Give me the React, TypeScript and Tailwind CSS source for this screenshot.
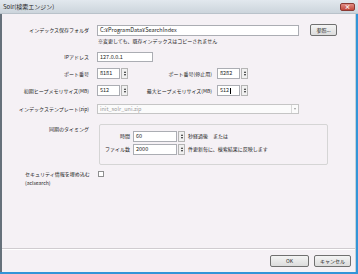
import React from 'react';

function Spin({ value, caret, w = 'w-[23px]' }: { value: string; caret?: boolean; w?: string }) {
  return (
    <div className="flex items-center gap-[1px] h-[11px]">
      <div className={`${w} h-full bg-white border border-[#abadb3] flex items-center pl-[2px] text-[5.5px] text-[#222]`}>
        {value}
        {caret && <span className="w-px h-[6px] bg-black ml-px" />}
      </div>
      <div className="w-[7px] h-full border border-[#b5b5b5] bg-[#f0f0f0] flex flex-col items-center justify-center gap-[1px]">
        <span className="block w-0 h-0 border-l-[1.5px] border-r-[1.5px] border-b-[2px] border-l-transparent border-r-transparent border-b-[#222]" />
        <span className="block w-0 h-0 border-l-[1.5px] border-r-[1.5px] border-t-[2px] border-l-transparent border-r-transparent border-t-[#222]" />
      </div>
    </div>
  );
}

function Label({ children }: { children: React.ReactNode }) {
  return <div className="w-[87px] shrink-0 text-right text-[5px] text-[#222]">{children}</div>;
}

function Btn({ children, w }: { children: React.ReactNode; w: string }) {
  return (
    <div className={`${w} h-[12px] rounded-[2px] border border-[#707070] bg-gradient-to-b from-[#f4f4f4] to-[#dcdcdc] flex items-center justify-center text-[5px] text-[#222]`}>
      {children}
    </div>
  );
}

export default function App() {
  return (
    <div
      className="w-[358px] h-[274px] flex flex-col overflow-hidden bg-[#3395d8]"
      style={{ fontFamily: '"Noto Sans CJK JP", "Liberation Sans", sans-serif' }}
    >
      {/* title bar */}
      <div className="h-[14px] shrink-0 flex items-center justify-between pl-[3px] pr-[3px] bg-gradient-to-b from-[#e2e8ee] to-[#ccd5dc] border-b border-[#b9c2ca]">
        <span className="text-[6px] text-[#1e1e1e]">Solr(検索エンジン)</span>
        <div className="w-[15px] h-[8px] rounded-[2px] bg-gradient-to-b from-[#e08c84] to-[#c2463a] border border-[#8a3a34] flex items-center justify-center text-white text-[6px] font-bold leading-none">
          ×
        </div>
      </div>

      <div className="flex-1 flex min-h-0">
        <div className="flex-1 flex flex-col bg-[#f5f1f5] border-l-2 border-[#66717b] border-r border-r-[#c8d0d6] mr-[2px] mb-[2px]">
          <div className="flex flex-col">
            {/* folder */}
            <div className="flex items-center gap-[8px] mt-[9px] h-[14px]">
              <Label>インデックス保存フォルダ</Label>
              <div className="w-[202px] h-[11px] bg-white border border-[#abadb3] flex items-center pl-[2px] text-[5.5px] text-[#222]">
                C:¥ProgramData¥SearchIndex
              </div>
              <div className="ml-[3px]">
                <Btn w="w-[27px]">参照...</Btn>
              </div>
            </div>
            <div className="pl-[96px] mt-[1px] h-[6px] flex items-center text-[5px] text-[#222]">
              ※変更しても、既存インデックスはコピーされません
            </div>

            {/* ip */}
            <div className="flex items-center gap-[8px] mt-[8px] h-[10px]">
              <Label>IPアドレス</Label>
              <div className="w-[56px] h-[10px] bg-white border border-[#abadb3] flex items-center pl-[2px] text-[5.5px] text-[#222]">
                127.0.0.1
              </div>
            </div>

            {/* ports */}
            <div className="flex items-center mt-[6px] h-[11px]">
              <div className="flex items-center gap-[8px]">
                <Label>ポート番号</Label>
                <Spin value="8181" />
              </div>
              <div className="w-[89px] text-right pr-[5px] text-[5px] text-[#222]">ポート番号(停止用)</div>
              <Spin value="8282" />
            </div>

            {/* heap */}
            <div className="flex items-center mt-[6px] h-[11px]">
              <div className="flex items-center gap-[8px]">
                <Label>初期ヒープメモリサイズ(MB)</Label>
                <Spin value="512" />
              </div>
              <div className="w-[89px] text-right pr-[5px] text-[5px] text-[#222]">最大ヒープメモリサイズ(MB)</div>
              <Spin value="512" caret />
            </div>

            {/* template */}
            <div className="flex items-center gap-[8px] mt-[8px] h-[10px]">
              <Label>インデックステンプレート(zip)</Label>
              <div className="w-[202px] h-[10px] bg-[#fbfbfb] border border-[#c5c5c5] flex items-center justify-between pl-[2px] text-[5.5px] text-[#9a9a9a]">
                init_solr_uni.zip
                <div className="w-[7px] h-full border-l border-[#d8d8d8] flex items-center justify-center">
                  <span className="block w-0 h-0 border-l-[1.5px] border-r-[1.5px] border-t-[2px] border-l-transparent border-r-transparent border-t-[#9a9a9a]" />
                </div>
              </div>
            </div>

            {/* sync timing */}
            <div className="flex items-start gap-[10px] mt-[10px]">
              <div className="w-[87px] shrink-0 text-right text-[5px] text-[#222] pt-[1px]">同期のタイミング</div>
              <div className="w-[229px] h-[41px] border border-[#d5d5d5] rounded-[2px] flex flex-col pt-[6px] gap-[3px]">
                <div className="flex items-center h-[10px]">
                  <div className="w-[33px] text-right pr-[3px] text-[5px] text-[#222]">時間</div>
                  <Spin value="60" w="w-[44px]" />
                  <span className="ml-[3px] text-[5px] text-[#222]">秒経過後　または</span>
                </div>
                <div className="flex items-center h-[10px]">
                  <div className="w-[33px] text-right pr-[3px] text-[5px] text-[#222]">ファイル数</div>
                  <Spin value="2000" w="w-[44px]" />
                  <span className="ml-[3px] text-[5px] text-[#222]">件更新毎に、検索結果に反映します</span>
                </div>
              </div>
            </div>

            {/* security */}
            <div className="flex items-start mt-[4px]">
              <div className="w-[74px] pl-[23px] shrink-0 text-[5px] leading-[9px] text-[#222]">
                <div className="whitespace-nowrap">セキュリティ情報を埋め込む</div>
                <div>(aclsearch)</div>
              </div>
              <div className="ml-[22px] mt-[2px] w-[6px] h-[6px] border border-[#8e8f8f] bg-white" />
            </div>
          </div>

          <div className="flex-1" />
          <div className="h-[2px] border-t border-[#d0ccd0] border-b border-b-white" />
          <div className="h-[22px] flex items-center justify-end gap-[5px] pr-[4px]">
            <Btn w="w-[39px]">OK</Btn>
            <Btn w="w-[37px]">キャンセル</Btn>
          </div>
        </div>
      </div>
    </div>
  );
}
